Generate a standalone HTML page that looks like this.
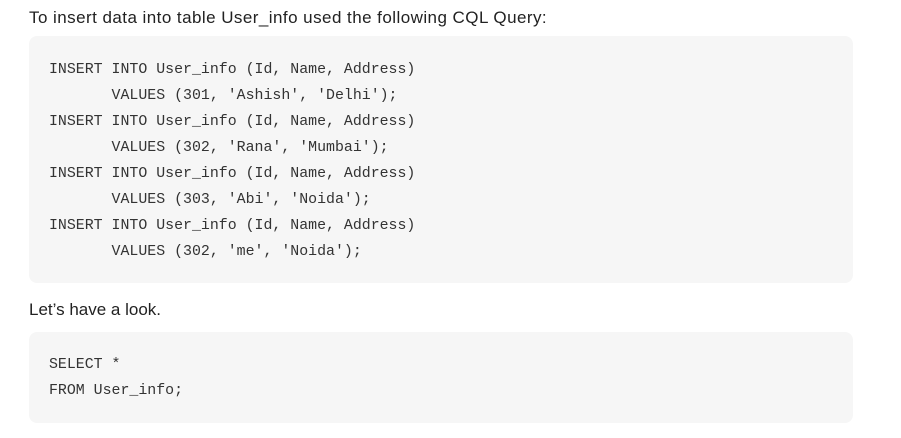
<html><head><style>
body{margin:0;background:#fff;width:901px;height:438px;overflow:hidden;font-family:"Liberation Sans",sans-serif;color:#222}
p{position:absolute;left:29px;margin:0;font-size:17px;line-height:20px}
.c{position:absolute;left:29px;width:824px;background:#f6f6f6;border-radius:8px;box-sizing:border-box;padding-left:20px;font-family:"Liberation Mono",monospace;font-size:14.9px;line-height:26px;color:#333;white-space:pre}
</style></head><body>
<p style="top:8px;letter-spacing:0.45px">To insert data into table User_info used the following CQL Query:</p>
<div class="c" style="top:36px;height:247px;padding-top:21px">INSERT INTO User_info (Id, Name, Address)
       VALUES (301, 'Ashish', 'Delhi');
INSERT INTO User_info (Id, Name, Address)
       VALUES (302, 'Rana', 'Mumbai');
INSERT INTO User_info (Id, Name, Address)
       VALUES (303, 'Abi', 'Noida');
INSERT INTO User_info (Id, Name, Address)
       VALUES (302, 'me', 'Noida');</div>
<p style="top:300px">Let’s have a look.</p>
<div class="c" style="top:332px;height:91px;padding-top:20px">SELECT *
FROM User_info;</div>
</body></html>
